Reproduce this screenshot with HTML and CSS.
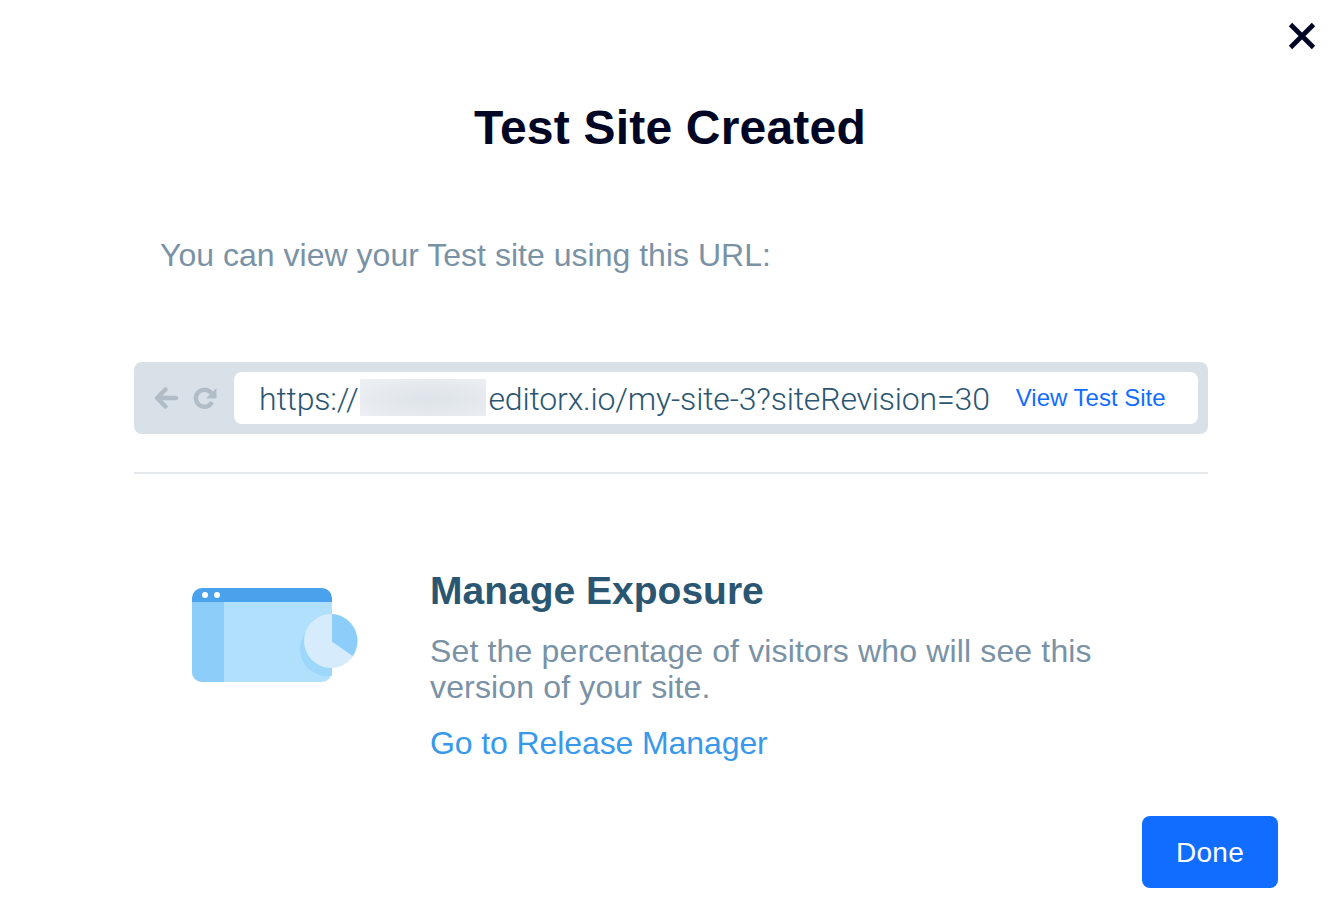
FILE: index.html
```html
<!DOCTYPE html>
<html lang="en">
<head>
<meta charset="utf-8">
<title>Test Site Created</title>
<link rel="stylesheet" href="styles.css">
</head>
<body>
<main class="modal">
  <button class="close" aria-label="Close">
    <svg width="30" height="30" viewBox="0 0 30 30"><path d="M3.5 3.5 26.500 26.500M26.500 3.500 3.500 26.500" fill="none" stroke="#000624" stroke-width="4.800"/></svg>
  </button>
  <h1 class="title">Test Site Created</h1>
  <p class="intro">You can view your Test site using this URL:</p>
  <div class="browser">
    <div class="nav-icons">
      <svg width="26" height="24" viewBox="0 0 26 24"><path d="M12.500 3.500 4 12l8.500 8.500M4.500 12H23" fill="none" stroke="#b1bdc6" stroke-width="4.500" stroke-linecap="round" stroke-linejoin="round"/></svg>
      <svg width="26" height="24" viewBox="0 0 26 24"><path d="M20 16a8.500 8.500 0 1 1-.6-8.500" fill="none" stroke="#b1bdc6" stroke-width="4.400"/><path d="M24.500 2v10.500H14z" fill="#b1bdc6"/></svg>
    </div>
    <div class="address">
      <span class="url">https://<span class="blur"></span>editorx.io/my-site-3?siteRevision=30</span>
      <a class="view-link">View Test Site</a>
    </div>
  </div>
  <hr class="divider">
  <section class="exposure">
    <svg class="art" width="190" height="120" viewBox="0 0 190 120">
      <path d="M12 27h140v70a10 10 0 0 1-10 10H22a10 10 0 0 1-10-10z" fill="#b0e0fb"/>
      <path d="M12 27h32v80H22a10 10 0 0 1-10-10z" fill="#8ccdf9"/>
      <path d="M22 13h120a10 10 0 0 1 10 10v4H12v-4a10 10 0 0 1 10-10z" fill="#4ba2ec"/>
      <circle cx="25" cy="20" r="3" fill="#fff"/>
      <circle cx="37" cy="20" r="3" fill="#fff"/>
      <path d="M152 47.500a27 27 0 1 0 0 53z" fill="#9dd7fa"/>
      <circle cx="151" cy="66" r="27" fill="#d6ecfc"/>
      <path d="M152 39a27 27 0 0 1 20.700 42L152 66.700z" fill="#8ccdf9"/>
    </svg>
    <div class="copy">
      <h2 class="heading">Manage Exposure</h2>
      <p class="desc">Set the percentage of visitors who will see this version of your site.</p>
      <a class="manager-link">Go to Release Manager</a>
    </div>
  </section>
  <div class="actions"><button class="done">Done</button></div>
</main>
</body>
</html>
```
FILE: styles.css
```css
html, body { margin: 0; padding: 0; background: #fff; }
body { font-family: "Liberation Sans", Arial, sans-serif; }
.modal { position: relative; width: 1340px; height: 908px; box-sizing: border-box; padding: 0 132px 0 134px; overflow: hidden; }
.close { position: absolute; top: 21px; right: 23px; width: 30px; height: 30px; padding: 0; border: 0; background: none; display: block; }
.close svg { display: block; }
.title { margin: 0 0 0 -134px; width: 1340px; padding-top: 100px; text-align: center; font-size: 48px; letter-spacing: 0.2px; line-height: 56px; font-weight: 700; color: #000624; }
.intro { margin: 81px 0 0 26px; font-size: 32px; letter-spacing: 0.02px; line-height: 36px; color: #7a92a5; }
.browser { margin-top: 89px; width: 1074px; height: 72px; box-sizing: border-box; padding: 10px; background: #d9e1e8; border-radius: 8px; display: flex; }
.nav-icons { width: 90px; display: flex; align-items: center; gap: 13px; padding-left: 9px; box-sizing: border-box; }
.address { flex: 1; background: #fff; border-radius: 8px; display: flex; align-items: center; padding-left: 25px; }
.url { font-family: Roboto, sans-serif; font-weight: 300; font-size: 32px; letter-spacing: -0.17px; color: #2b5672; white-space: nowrap; display: flex; align-items: center; padding-top: 2px; }
.blur { display: block; width: 126px; height: 37px; background: radial-gradient(ellipse at 55% 55%, #dde3e8 0%, #e6eaee 55%, #eef1f4 100%); margin: -3px 2px 0 2px; }
.view-link { margin-left: 26px; font-size: 24px; color: #116dff; white-space: nowrap; }
.divider { margin: 38px 0 0; width: 1074px; height: 2px; border: 0; background: #e6e9ec; }
.exposure { display: flex; margin-top: 86px; }
.art { margin: 15px 0 0 46px; flex: none; display: block; }
.copy { margin-left: 60px; width: 690px; }
.heading { margin: 3px 0 0; font-size: 39px; line-height: 56px; font-weight: 700; color: #2b5672; }
.desc { margin: 14px 0 0; font-size: 32px; letter-spacing: 0.15px; line-height: 36px; color: #7a92a5; }
.manager-link { display: block; margin-top: 20px; font-size: 32px; letter-spacing: -0.1px; line-height: 36px; color: #3899ec; }
.actions { position: absolute; right: 62px; bottom: 20px; }
.done { display: block; width: 136px; height: 72px; padding: 2px 0 0; border: 0; border-radius: 8px; background: #116dff; color: #fff; font-family: "Liberation Sans", Arial, sans-serif; font-size: 28px; letter-spacing: 0.3px; font-weight: 400; }
```
